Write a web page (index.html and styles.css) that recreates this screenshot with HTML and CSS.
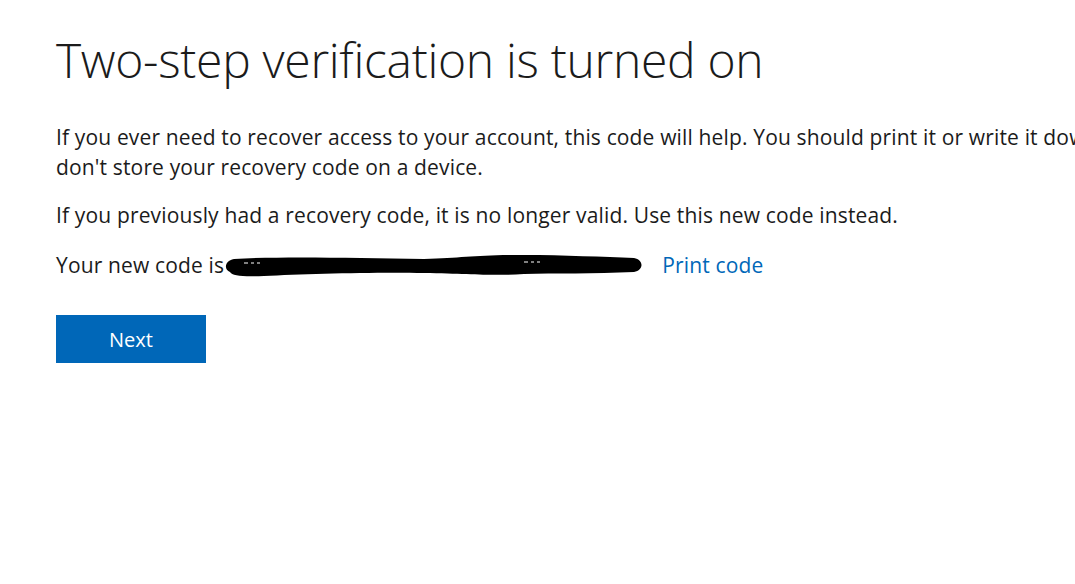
FILE: index.html
```html
<!DOCTYPE html>
<html lang="en">
<head>
<meta charset="utf-8">
<title>Two-step verification is turned on</title>
<link rel="stylesheet" href="styles.css">
</head>
<body>
<main class="page">
  <h1 class="title">Two-step verification is turned on</h1>
  <p class="text wide">If you ever need to recover access to your account, this code will help. You should print it or write it down, but don't store your recovery code on a device.</p>
  <p class="text">If you previously had a recovery code, it is no longer valid. Use this new code instead.</p>
  <p class="text code-line">
    <span>Your new code is</span>
    <svg class="redact" width="420" height="26" viewBox="0 0 420 26" aria-hidden="true">
      <path d="M10 7 C60 4 130 6 200 7 C240 6 250 3 300 3 C340 3 380 5 410 6 C420 8 420 18 410 20 C370 22 330 21 300 22 C270 24 250 22 200 21 C150 20 80 22 40 24 C20 25 8 24 6 20 C0 18 0 9 10 7 Z" fill="#000"/>
      <path d="M20 11 h4 M27 11 h3 M33 11 h3" stroke="#fff" stroke-width="1"/>
      <path d="M300 10 h4 M307 10 h3 M313 10 h3" stroke="#fff" stroke-width="1"/>
    </svg>
    <a class="link" href="#">Print code</a>
  </p>
  <button class="btn" type="button">Next</button>
</main>
</body>
</html>
```

FILE: styles.css
```css
html, body {
  margin: 0;
  padding: 0;
  background: #fff;
  overflow: hidden;
}
body {
  font-family: "Open Sans", "Noto Sans", sans-serif;
  color: #000;
}
.page {
  padding: 27px 0 0 56px;
}
.title {
  margin: 0 0 29px 0;
  font-weight: 300;
  font-size: 48px;
  line-height: 66px;
  letter-spacing: -0.3px;
  color: #1b1b1b;
}
.text {
  margin: 0 0 18px 0;
  font-size: 21px;
  line-height: 30px;
  letter-spacing: 0.15px;
  color: #1b1b1b;
}
.wide {
  width: 1110px;
  white-space: normal;
}
.code-line {
  display: flex;
  align-items: center;
  margin-top: 20px;
  margin-bottom: 35px;
}
.redact {
  display: block;
  margin-left: 0;
}
.link {
  margin-left: 18px;
  color: #0067b8;
  text-decoration: none;
}
.btn {
  display: block;
  width: 150px;
  height: 48px;
  border: 0;
  padding: 0;
  background: #0067b8;
  color: #fff;
  font-family: "Open Sans", "Noto Sans", sans-serif;
  font-size: 20px;
}
```
